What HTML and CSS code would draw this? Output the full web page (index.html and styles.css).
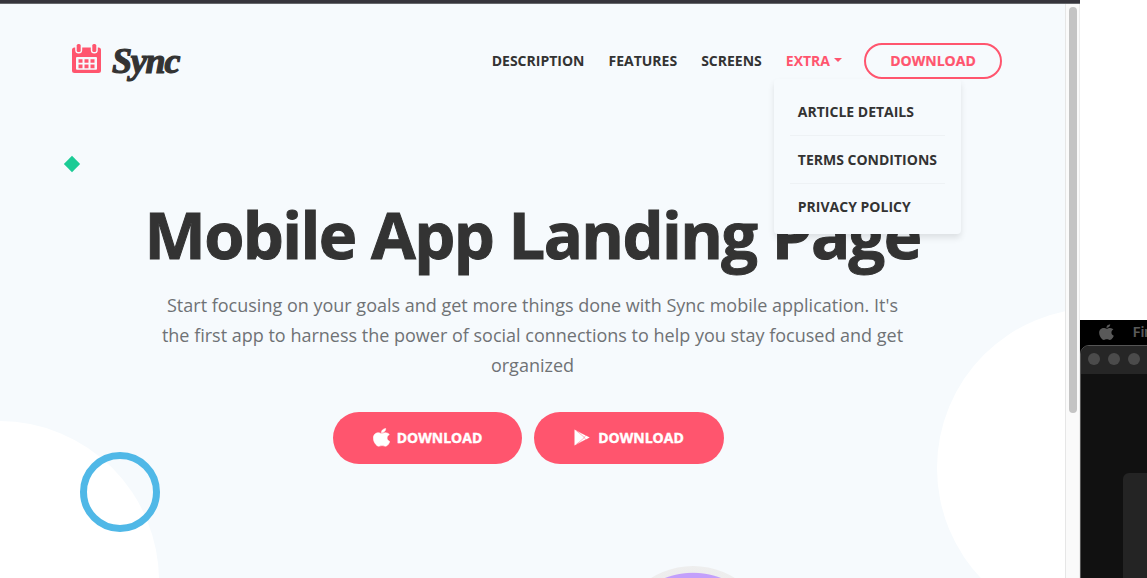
FILE: index.html
```html
<!DOCTYPE html>
<html lang="en">
<head>
<meta charset="utf-8">
<title>Sync - Mobile App Landing Page</title>
<link rel="stylesheet" href="styles.css">
</head>
<body>
<div class="desktop">
  <div class="browser">
    <div class="topbar"></div>
    <div class="viewport">
      <main class="page">
        <span class="blob blob-left"></span>
        <span class="blob blob-right"></span>
        <span class="ring"></span>
        <span class="diamond"></span>
        <span class="device"></span>
        <header class="nav">
          <a class="brand">
            <svg class="brand-icon" viewBox="0 0 30 31" width="30" height="31">
              <path fill="#ff556e" d="M2.500 4.500h.7V7a3.500 3.500 0 0 0 7 0V4.500h8.600V7a3.500 3.500 0 0 0 7 0V4.500h.7a2.500 2.500 0 0 1 2.500 2.500v20.500a2.500 2.500 0 0 1-2.500 2.500h-24A2.500 2.500 0 0 1 0 27.500V7a2.500 2.500 0 0 1 2.500-2.500Z"/>
              <rect x="4.700" y="1" width="4" height="8" rx="1.600" fill="#ff556e"/>
              <rect x="20.300" y="1" width="4" height="8" rx="1.600" fill="#ff556e"/>
              <rect x="4" y="14" width="21" height="12.700" rx="1" fill="#f6fafd"/>
              <path fill="#ff556e" d="M6.500 16.200h4v3.600h-4zM12.500 16.200h4v3.600h-4zM18.500 16.200h4v3.600h-4zM6.500 21.500h4v3.800h-4zM12.500 21.500h4v3.800h-4zM18.500 21.500h4v3.800h-4z"/>
            </svg>
            <span class="brand-name">Sync</span>
          </a>
          <nav class="links">
            <a>DESCRIPTION</a>
            <a>FEATURES</a>
            <a>SCREENS</a>
            <div class="extra">
              <a class="active">EXTRA<i class="caret"></i></a>
              <div class="menu">
                <a>ARTICLE DETAILS</a>
                <a>TERMS CONDITIONS</a>
                <a>PRIVACY POLICY</a>
              </div>
            </div>
          </nav>
          <a class="outline-btn">DOWNLOAD</a>
        </header>
        <section class="hero">
          <h1>Mobile App Landing Page</h1>
          <p>Start focusing on your goals and get more things done with Sync mobile application. It's<br>the first app to harness the power of social connections to help you stay focused and get<br>organized</p>
          <div class="actions">
            <a class="btn">
              <svg viewBox="0 20 384 480" width="17" height="19" preserveAspectRatio="none"><path fill="#fff" stroke="#fff" stroke-width="14" d="M319 269c0-37 16-64 50-84-19-27-47-42-85-45-35-3-74 21-88 21-15 0-49-20-76-20C64 142 8 186 8 275c0 26 5 53 14 81 13 37 59 127 107 125 25 0 43-18 76-18 32 0 48 18 76 18 49 0 86-82 98-119-65-31-60-90-60-93zM262 105c27-32 25-62 24-73-24 2-52 17-68 35-17 20-28 44-25 72 26 2 50-12 69-34z"/></svg>DOWNLOAD</a>
            <a class="btn play">
              <svg viewBox="0 0 16 17" width="16" height="17"><path fill="#fff" d="M0.500 0.500 15.700 8.500 0.500 16.500Z"/><path fill="none" stroke="#ff556e" stroke-width=".4" d="m1.500 1 9 7.500-9 7.500M3 2l9 4.200-2 2.300 2 2.200L3 15"/></svg>DOWNLOAD</a>
          </div>
        </section>
      </main>
      <div class="scrollbar"><div class="thumb"></div></div>
    </div>
  </div>
  <div class="other">
    <div class="menubar">
      <svg viewBox="0 0 384 512" width="15" height="18" preserveAspectRatio="none"><path fill="#595959" d="M319 269c0-37 16-64 50-84-19-27-47-42-85-45-35-3-74 21-88 21-15 0-49-20-76-20C64 142 4 186 4 275c0 26 5 53 14 81 13 37 59 127 107 125 25 0 43-18 76-18 32 0 48 18 76 18 49 0 90-82 102-119-65-31-60-90-60-93zM262 105c27-32 25-62 24-73-24 2-52 17-68 35-17 20-28 44-25 72 26 2 50-12 69-34z"/></svg>
      <span>Fin</span>
    </div>
    <div class="window">
      <div class="titlebar"><i></i><i></i><i></i></div>
      <div class="panel"></div>
    </div>
  </div>
</div>
</body>
</html>
```
FILE: styles.css
```css
* { box-sizing: border-box; }
body { margin: 0; background: #fff; font-family: "Open Sans", sans-serif; overflow: hidden; }
.desktop { display: flex; width: 1147px; height: 578px; overflow: hidden; }
.browser { width: 1080px; height: 578px; flex: none; display: flex; flex-direction: column; }
.topbar { height: 4px; background: #36353c; border-bottom: 1px solid #66686c; flex: none; }
.viewport { display: flex; height: 574px; }
.page { position: relative; width: 1065px; height: 574px; background: #f6fafd; overflow: hidden; flex: none; }
.scrollbar { width: 15px; background: #fafafa; border-left: 1px solid #e6e6e6; border-right: 1px solid #ececec; padding: 3px 0 0 3px; }
.thumb { width: 8px; height: 406px; border-radius: 4px; background: #c4c4c4; }

.blob { position: absolute; width: 320px; height: 320px; border-radius: 50%; background: #fff; }
.blob-left { left: -161px; top: 417px; }
.blob-right { left: 937px; top: 304px; }
.ring { position: absolute; left: 80px; top: 448px; width: 80px; height: 80px; border: 7px solid #50b8e7; border-radius: 50%; }
.diamond { position: absolute; left: 66px; top: 154px; width: 12px; height: 12px; background: #1bcb95; transform: rotate(45deg) scale(.96); }
.device { position: absolute; left: 614px; top: 562px; width: 158px; height: 158px; border-radius: 50%; background: radial-gradient(circle at 50% 54%, #c3a0fb 78px, #ededed 79px, #f1f2f2 100%); }

.nav { position: relative; z-index: 2; display: flex; align-items: center; height: 114px; padding: 0 63px 0 72px; }
.brand { display: flex; align-items: center; gap: 10px; height: 40px; }
.brand-icon { margin-top: -6px; }
.brand-name { margin-top: -1px; font: italic bold 36px/40px "Liberation Serif", serif; letter-spacing: -1.200px; color: #333; -webkit-text-stroke: 1.200px #333; }
.links { display: flex; gap: 24px; margin-left: auto; margin-right: 22px; font-size: 14px; font-weight: 700; line-height: 20px; color: #333; white-space: nowrap; }
.extra { position: relative; }
.active { display: flex; align-items: center; color: #ff556e; }
.caret { margin-left: 4px; margin-bottom: 2px; border: 4px solid transparent; border-top-color: #ff556e; border-bottom: 0; }
.menu { position: absolute; left: -12px; top: 28px; width: 187px; height: 155px; padding: 9px 16px; display: flex; flex-direction: column; background: #f6fafd; border-radius: 4px; box-shadow: 0 4px 6px rgba(0,0,0,.1); }
.menu a { flex: none; height: 48px; padding: 14px 8px 0; line-height: 20px; border-bottom: 1px solid #eef2f5; }
.menu a:last-child { height: 40px; padding-top: 13px; border: 0; }
.outline-btn { position: relative; z-index: 3; width: 138px; height: 36px; border: 2px solid #ff556e; border-radius: 18px; color: #ff556e; font-size: 14px; font-weight: 700; line-height: 32px; text-align: center; -webkit-text-stroke: .2px #ff556e; }

.hero { position: relative; display: flex; flex-direction: column; align-items: center; padding-top: 76px; }
h1 { margin: 0; font-size: 65px; font-weight: 700; line-height: 80px; letter-spacing: -1.600px; color: #333; white-space: nowrap; -webkit-text-stroke: 1px #333; }
.hero p { margin: 16px 0 0; font-size: 18px; line-height: 30px; color: #6f7275; text-align: center; white-space: nowrap; }
.actions { display: flex; gap: 12px; margin: 32px 8px 0 0; }
.btn { display: flex; align-items: center; justify-content: center; gap: 7px; width: 189px; height: 52px; padding-bottom: 2px; border-radius: 26px; background: #ff556e; color: #fff; font-size: 14px; font-weight: 700; -webkit-text-stroke: .4px #fff; }
.btn svg { -webkit-text-stroke: 0; }
.play { width: 190px; gap: 8px; }

.other { width: 67px; margin-top: 320px; background: #000; overflow: hidden; flex: none; }
.menubar { height: 25px; display: flex; align-items: center; gap: 19px; padding: 0 0 2px 19px; color: #595959; font: bold 13px Inter, sans-serif; }
.menubar svg { flex: none; }
.window { height: 240px; width: 140px; background: #111; border: 1px solid #555; border-radius: 9px 0 0 0; overflow: hidden; }
.titlebar { height: 28px; display: flex; align-items: center; gap: 8px; padding: 0 0 2px 7px; background: #262626; }
.titlebar i { width: 12px; height: 12px; border-radius: 50%; background: #4b4b4b; }
.panel { margin: 99px 0 0 42px; height: 130px; background: #242424; border-radius: 6px 0 0 0; }
```
